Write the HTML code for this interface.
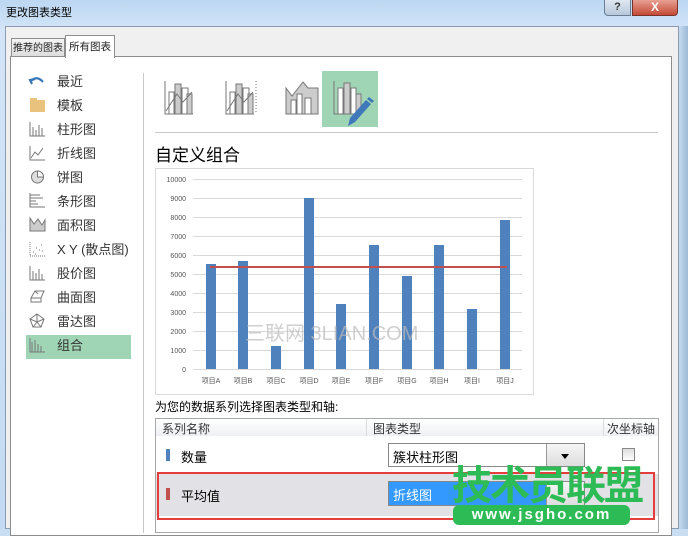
<!DOCTYPE html>
<html><head><meta charset="utf-8"><style>
*{margin:0;padding:0;box-sizing:border-box}
body{width:688px;height:529px;overflow:hidden;position:relative;font-family:"Liberation Sans","Noto Sans CJK SC",sans-serif;font-size:12px;color:#222;background:#c9def3}
.a{position:absolute}
.nav{position:absolute;left:57px;font-size:13px;color:#333;line-height:16px}
</style></head><body>
<div class="a" style="left:0;top:0;width:688px;height:529px;background:linear-gradient(180deg,#bcd7f2,#d3e5f7 30px,#c2daf2)"></div>
<div class="a" style="left:6px;top:4px;font-size:11px;color:#000">更改图表类型</div>
<div class="a" style="left:604px;top:0;width:27px;height:16px;border:1px solid #6a7d94;border-top:none;border-radius:0 0 0 4px;background:linear-gradient(#dfe8f2,#b8c8da);text-align:center;font-size:11px;font-weight:bold;color:#333;line-height:14px">?</div>
<div class="a" style="left:632px;top:0;width:46px;height:16px;border:1px solid #7a3228;border-top:none;border-radius:0 0 4px 0;background:linear-gradient(#e8a092,#c44a36);text-align:center;font-size:12px;font-weight:bold;color:#fff;line-height:14px">X</div>
<div class="a" style="left:5px;top:26px;width:674px;height:503px;background:#f0f0f0;border:1px solid #8a9ab0"></div>
<div class="a" style="left:679px;top:26px;width:9px;height:503px;background:linear-gradient(90deg,#c5dbf1,#9cb9d6)"></div>
<!-- tabs -->
<div class="a" style="left:11px;top:38px;width:54px;height:19px;border:1px solid #8d8d8d;border-bottom:none;background:linear-gradient(#f4f4f4,#dcdcdc);font-size:10px;line-height:19px;text-align:center;white-space:nowrap;overflow:hidden">推荐的图表</div>
<div class="a" style="left:10px;top:56px;width:662px;height:480px;background:#fff;border:1px solid #8d8d8d"></div>
<div class="a" style="left:65px;top:35px;width:50px;height:23px;border:1px solid #8d8d8d;border-bottom:none;background:#fff;font-size:10.5px;line-height:22px;text-align:center;white-space:nowrap;overflow:hidden">所有图表</div>
<!-- nav -->
<div class="a" style="left:143px;top:73px;width:1px;height:460px;background:#c8c8c8"></div>
<div class="a" style="left:26px;top:335px;width:105px;height:24px;background:#9fd5b5"></div>
<svg class="a" style="left:28px;top:74px" width="20" height="290" fill="none" stroke="#777" stroke-width="1">
<path d="M4 10 L2 6 L7 5" stroke="#3b78b8" stroke-width="2.2"/><path d="M3 7 Q9 1 15 8" stroke="#3b78b8" stroke-width="2.2"/>
<rect x="2" y="26" width="15" height="12" fill="#e9c27e" stroke="none"/><rect x="2" y="24" width="7" height="3" fill="#e9c27e" stroke="none"/>
<path d="M2 48 V62 H17 M5 62V53 M8 62V56 M11 62V51 M14 62V54"/>
<path d="M2 72 V86 H17 M3 84 L7 78 L10 81 L15 74"/>
<circle cx="9.5" cy="103" r="6" fill="#ddd"/><path d="M9.5 97 A6 6 0 0 1 15.5 103 L9.5 103Z" fill="#fff"/>
<path d="M2 119 V133 H17 M2 121H12 M2 124H15 M2 127H8 M2 130H10"/>
<path d="M2 144 L6 150 L10 145 L14 151 L17 146 V157 H2Z" fill="#ccc"/>
<path d="M2 168 V182 H17" stroke-dasharray="1 1"/><path d="M5 178h1M8 174h1M11 176h1M13 171h1M7 180h1M14 177h1" />
<path d="M2 192 V206 H17 M5 206V197 M8 206V199 M11 206V195 M14 206V200"/>
<path d="M3 224 L7 217 H16 L13 224Z M3 224V228 H13 V224 M7 217 L10 220" />
<path d="M9 240 L16 245 L13 253 H5 L2 245Z M9 240 V248 M2 245 L9 248 L16 245 M5 253 L9 248 L13 253"/>
<path d="M2 264 V278 H17 M4 278V268 M7 278V266 M10 278V270 M13 278V272"/>
</svg>
<div class="nav" style="top:74px">最近</div>
<div class="nav" style="top:98px">模板</div>
<div class="nav" style="top:122px">柱形图</div>
<div class="nav" style="top:146px">折线图</div>
<div class="nav" style="top:170px">饼图</div>
<div class="nav" style="top:194px">条形图</div>
<div class="nav" style="top:218px">面积图</div>
<div class="nav" style="top:242px">X Y (散点图)</div>
<div class="nav" style="top:266px">股价图</div>
<div class="nav" style="top:290px">曲面图</div>
<div class="nav" style="top:314px">雷达图</div>
<div class="nav" style="top:338px">组合</div>
<!-- top icons -->
<div class="a" style="left:322px;top:71px;width:56px;height:56px;background:#9fd5b5"></div>
<svg class="a" style="left:160px;top:78px" width="230" height="50" fill="#ccc" stroke="#777" stroke-width="1">
<path d="M5 3 V36 H33" fill="none"/><rect x="9" y="14" width="5" height="22" fill="#fff"/><rect x="15" y="6" width="6" height="30"/><rect x="22" y="10" width="6" height="26" fill="#fff"/><rect x="27" y="16" width="5" height="20"/><path d="M6 33 L17 16 L23 24 L32 14" fill="none"/>
<g transform="translate(61,0)"><path d="M5 3 V36 H33" fill="none"/><rect x="9" y="14" width="5" height="22" fill="#fff"/><rect x="15" y="6" width="6" height="30"/><rect x="22" y="10" width="6" height="26" fill="#fff"/><rect x="27" y="16" width="5" height="20"/><path d="M6 33 L17 16 L23 24 L32 14" fill="none"/><path d="M35 3V36" stroke-dasharray="1 2" fill="none"/></g>
<g transform="translate(123,0)"><path d="M3 10 L9 18 L20 4 L25 10 H35 V36 H3Z"/><rect x="8" y="22" width="5" height="14" fill="#fff"/><rect x="14" y="16" width="5" height="20" fill="#fff"/><rect x="22" y="20" width="6" height="16" fill="#fff"/></g>
<g transform="translate(166,0)"><path d="M8 3 V36 H35" fill="none"/><rect x="12" y="10" width="5" height="26" fill="#fff"/><rect x="18" y="5" width="6" height="31"/><rect x="25" y="10" width="5" height="26" fill="#fff"/><rect x="30" y="16" width="5" height="20"/><path d="M22 48 L24 40 L40 22 L45 26 L29 44Z" fill="#3f79ba" stroke="none"/><path d="M41 21 L43 19 L48 23 L46 25Z" fill="#3f79ba" stroke="none"/></g>
</svg>
<div class="a" style="left:155px;top:132px;width:503px;height:1px;background:#c8c8c8"></div>
<div class="a" style="left:155px;top:141px;font-size:17px;color:#000">自定义组合</div>
<!-- chart -->
<svg class="a" style="left:155px;top:168px" width="379" height="228" font-family="Liberation Sans,Noto Sans CJK SC,sans-serif" font-size="7" fill="#555">
<rect x="0.5" y="0.5" width="378" height="226" fill="#fff" stroke="#d9d9d9"/>
<g stroke="#d9d9d9" stroke-width="1">
<path d="M38 11.5H367M38 30.5H367M38 49.5H367M38 68.5H367M38 87.5H367M38 106.5H367M38 125.5H367M38 144.5H367M38 163.5H367M38 182.5H367M38 201.5H367"/></g>
<g text-anchor="end"><text x="31" y="14">10000</text><text x="31" y="33">9000</text><text x="31" y="52">8000</text><text x="31" y="71">7000</text><text x="31" y="90">6000</text><text x="31" y="109">5000</text><text x="31" y="128">4000</text><text x="31" y="147">3000</text><text x="31" y="166">2000</text><text x="31" y="185">1000</text><text x="31" y="204">0</text></g>
<g fill="#4f81bd">
<rect x="51" y="96" width="10" height="105"/><rect x="83" y="93" width="10" height="108"/><rect x="116" y="178" width="10" height="23"/><rect x="149" y="30" width="10" height="171"/><rect x="181" y="136" width="10" height="65"/><rect x="214" y="77" width="10" height="124"/><rect x="247" y="108" width="10" height="93"/><rect x="279" y="77" width="10" height="124"/><rect x="312" y="141" width="10" height="60"/><rect x="345" y="52" width="10" height="149"/></g>
<path d="M55 99H352" stroke="#c0504d" stroke-width="2"/>
<g text-anchor="middle"><text x="56" y="215">项目A</text><text x="88" y="215">项目B</text><text x="121" y="215">项目C</text><text x="154" y="215">项目D</text><text x="186" y="215">项目E</text><text x="219" y="215">项目F</text><text x="252" y="215">项目G</text><text x="284" y="215">项目H</text><text x="317" y="215">项目I</text><text x="350" y="215">项目J</text></g>
<text x="90" y="172" font-size="20" fill="#bbb" fill-opacity="0.7">三联网 3LIAN.COM</text>
</svg>
<div class="a" style="left:155px;top:398px;font-size:12px;color:#000">为您的数据系列选择图表类型和轴:</div>
<!-- table -->
<div class="a" style="left:155px;top:418px;width:504px;height:115px;border:1px solid #a8a8a8;background:#fff"></div>
<div class="a" style="left:156px;top:419px;width:502px;height:17px;background:linear-gradient(#fff,#eef0f3)"></div>
<div class="a" style="left:366px;top:419px;width:1px;height:17px;background:#ddd"></div>
<div class="a" style="left:603px;top:419px;width:1px;height:17px;background:#ddd"></div>
<div class="a" style="left:162px;top:420px;color:#333">系列名称</div>
<div class="a" style="left:373px;top:420px;color:#333">图表类型</div>
<div class="a" style="left:607px;top:420px;color:#333">次坐标轴</div>
<div class="a" style="left:166px;top:449px;width:4px;height:12px;background:#4f81bd"></div>
<div class="a" style="left:181px;top:447px;font-size:13px;color:#000">数量</div>
<div class="a" style="left:388px;top:443px;width:197px;height:24px;border:1px solid #888;background:#fff"></div>
<div class="a" style="left:393px;top:447px;font-size:13px;color:#000">簇状柱形图</div>
<div class="a" style="left:546px;top:444px;width:38px;height:22px;border-left:1px solid #999;background:linear-gradient(#f6f6f6,#ddd)"></div>
<div class="a" style="left:561px;top:454px;border:4px solid transparent;border-top:5px solid #000"></div>
<div class="a" style="left:622px;top:448px;width:13px;height:13px;border:1px solid #888;background:linear-gradient(#ddd,#fff)"></div>
<div class="a" style="left:156px;top:474px;width:502px;height:42px;background:#e1e1e6"></div>
<div class="a" style="left:166px;top:488px;width:4px;height:12px;background:#c0504d"></div>
<div class="a" style="left:181px;top:486px;font-size:13px;color:#000">平均值</div>
<div class="a" style="left:388px;top:481px;width:197px;height:25px;border:1px solid #888;background:#fff"></div>
<div class="a" style="left:389px;top:482px;width:157px;height:23px;background:#3399ff"></div>
<div class="a" style="left:393px;top:485px;font-size:13px;color:#fff">折线图</div>
<div class="a" style="left:546px;top:482px;width:38px;height:23px;border-left:1px solid #999;background:linear-gradient(#f6f6f6,#ddd)"></div>
<div class="a" style="left:157px;top:472px;width:498px;height:48px;border:2px solid #e53c3c"></div>
<!-- watermark -->
<div class="a" style="left:452px;top:458px;font-size:40px;font-weight:bold;color:#2dbb55;letter-spacing:-2px;line-height:48px;font-family:'Noto Sans CJK SC',sans-serif">技术员联盟</div>
<div class="a" style="left:453px;top:505px;width:177px;height:20px;border-radius:6px;background:#2dbb55;color:#fff;font-size:15px;font-weight:bold;text-align:center;line-height:20px;letter-spacing:2px">www.jsgho.com</div>
</body></html>
